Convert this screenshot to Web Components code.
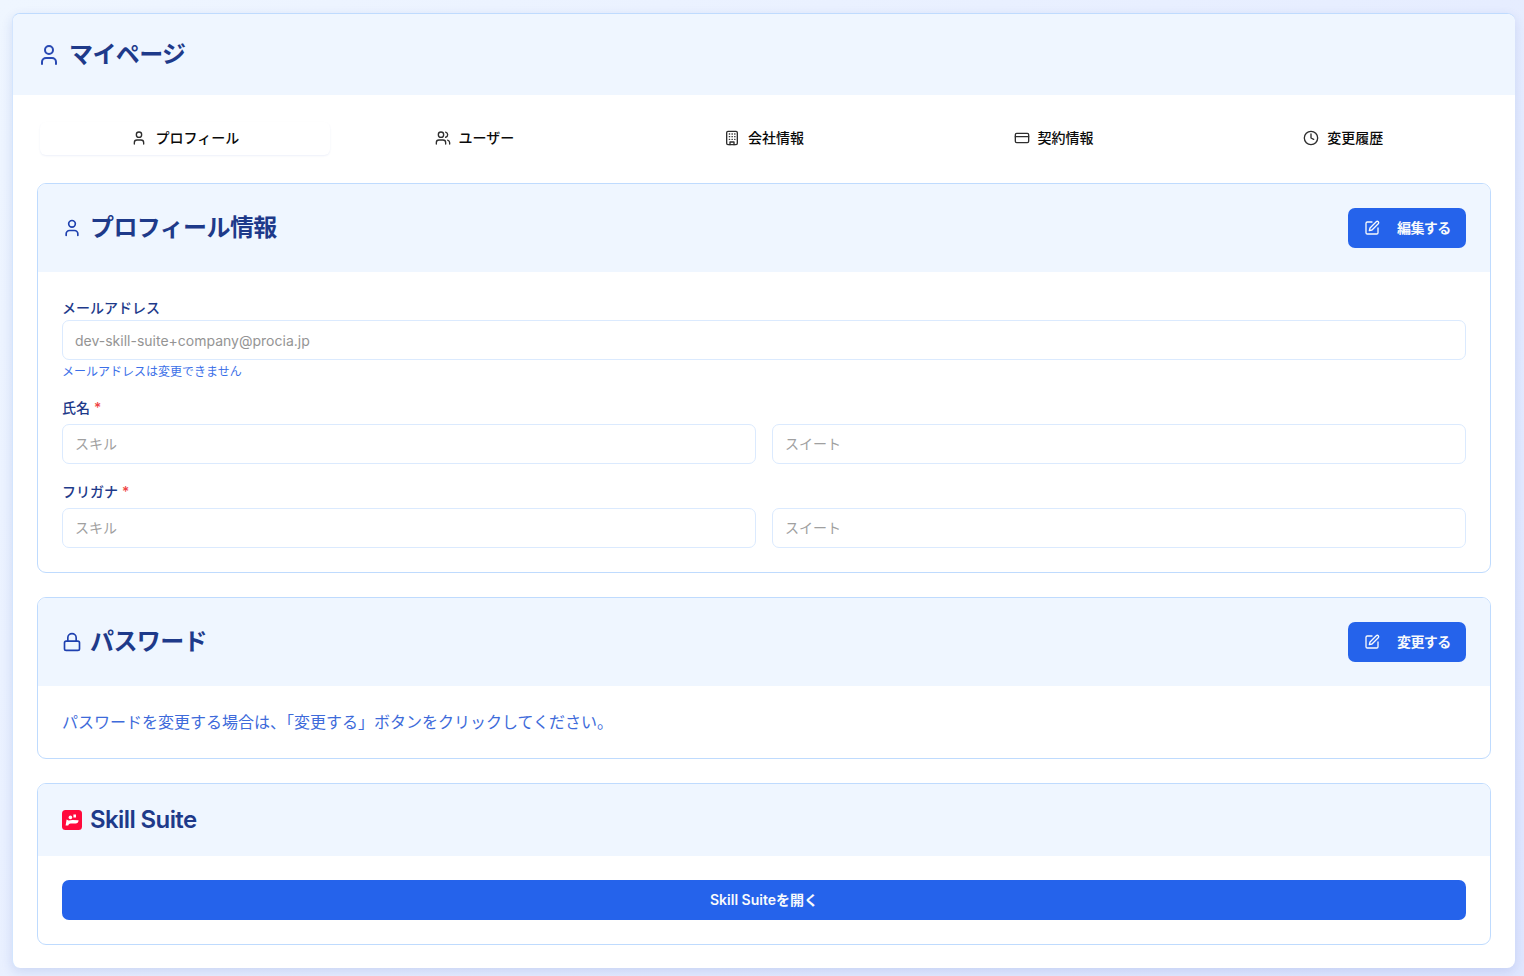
<!DOCTYPE html>
<html lang="ja">
<head>
<meta charset="utf-8">
<title>マイページ</title>
<style>
  html, body { margin: 0; height: 976px; overflow: hidden; }
  body {
    padding: 13px 9px 8px 12px;
    box-sizing: border-box;
    background: linear-gradient(135deg, #eff6ff, #e0e7ff);
    font-family: Inter, "Noto Sans CJK JP", sans-serif;
  }
</style>
</head>
<body>
<my-page>
  <span slot="title">マイページ</span>
  <tab-bar></tab-bar>
  <section-card icon="user" heading="プロフィール情報" action="編集する" head="88">
    <profile-form></profile-form>
  </section-card>
  <section-card icon="lock" heading="パスワード" action="変更する" head="88">
    <p class="note" style="margin:0;padding:0;font-size:16px;line-height:24px;color:#2456d6;opacity:.88;">パスワードを変更する場合は、「変更する」ボタンをクリックしてください。</p>
  </section-card>
  <section-card icon="logo" heading="Skill Suite" head="72">
    <wide-button>Skill Suiteを開く</wide-button>
  </section-card>
</my-page>

<script>
const ICONS = {
  user: '<path d="M19 21v-2a4 4 0 0 0-4-4H9a4 4 0 0 0-4 4v2"/><circle cx="12" cy="7" r="4"/>',
  users: '<path d="M16 21v-2a4 4 0 0 0-4-4H6a4 4 0 0 0-4 4v2"/><circle cx="9" cy="7" r="4"/><path d="M22 21v-2a4 4 0 0 0-3-3.87"/><path d="M16 3.13a4 4 0 0 1 0 7.75"/>',
  building: '<rect x="4" y="2" width="16" height="20" rx="2"/><path d="M9 22v-4h6v4"/><path d="M8 6h.5M16 6h.5M12 6h.5M12 10h.5M12 14h.5M16 10h.5M16 14h.5M8 10h.5M8 14h.5"/>',
  card: '<rect x="2" y="5" width="20" height="14" rx="2"/><line x1="2" y1="10" x2="22" y2="10"/>',
  clock: '<circle cx="12" cy="12" r="10"/><polyline points="12 6 12 12 16 14"/>',
  edit: '<path d="M12 3H5a2 2 0 0 0-2 2v14a2 2 0 0 0 2 2h14a2 2 0 0 0 2-2v-7"/><path d="M18.4 2.6a2.1 2.1 0 0 1 3 3L12 15l-4 1 1-4Z"/>',
  lock: '<rect x="3" y="11" width="18" height="11" rx="2"/><path d="M7 11V7a5 5 0 0 1 10 0v4"/>'
};

function icon(name, size, width) {
  return `<svg width="${size}" height="${size}" viewBox="0 0 24 24" fill="none" stroke="currentColor" stroke-width="${width || 2}" stroke-linecap="round" stroke-linejoin="round" aria-hidden="true">${ICONS[name]}</svg>`;
}

const LOGO = `<svg width="20" height="20" viewBox="0 0 20 20" aria-hidden="true">
  <rect width="20" height="20" rx="3.5" fill="#ff0a3c"/>
  <path d="M3.6 15.4 4.6 9.6 6.6 10.6C8 10 9.4 9.8 11 9.9L16.6 10.2C16.4 12.4 15.4 13.4 13.6 13.4H8.6C7.4 13.4 6.6 14.2 6.2 15.4Z" fill="#fff"/>
  <circle cx="8.4" cy="7.4" r="1.8" fill="#fff"/>
  <path d="M11.4 4.6h2.6v2.8h-2.6z" fill="#fff"/>
</svg>`;

class MyPage extends HTMLElement {
  constructor() {
    super();
    this.attachShadow({mode: 'open'});
    this.shadowRoot.innerHTML = `
      <style>
        :host {
          display: block;
          background: #fff;
          border-top: 1px solid #bfdbfe;
          border-left: 1px solid #d3e5fe;
          border-radius: 8px;
          box-shadow: 0 4px 12px rgba(30, 64, 175, .14);
          height: 955px;
          box-sizing: border-box;
          overflow: hidden;
        }
        header {
          height: 81px;
          background: #eff6ff;
          display: flex;
          align-items: center;
          gap: 8px;
          padding-left: 24px;
          color: #1e40af;
        }
        header svg { opacity: .95; }
        h1 {
          margin: 0;
          font-size: 24px;
          line-height: 32px;
          font-weight: 700;
          letter-spacing: -.6px;
          color: #1e3a8a;
        }
        main {
          padding: 24px 24px 0;
          display: flex;
          flex-direction: column;
          gap: 24px;
        }
      </style>
      <header>${icon('user', 24)}<h1><slot name="title"></slot></h1></header>
      <main><slot></slot></main>
    `;
  }
}

class TabBar extends HTMLElement {
  constructor() {
    super();
    this.attachShadow({mode: 'open'});
    const tabs = [['user', 'プロフィール'], ['users', 'ユーザー'], ['building', '会社情報'], ['card', '契約情報'], ['clock', '変更履歴']];
    this.shadowRoot.innerHTML = `
      <style>
        :host {
          display: grid;
          grid-template-columns: repeat(5, 1fr);
          padding: 3px 3px 4px;
          height: 40px;
          box-sizing: border-box;
        }
        div {
          display: flex;
          align-items: center;
          justify-content: center;
          gap: 8px;
          padding-bottom: 2px;
          font-size: 14px;
          line-height: 20px;
          font-weight: 500;
          color: #0a0a0a;
          border-radius: 6px;
        }
        div svg { opacity: .85; }
        .on { padding-left: 1px; box-shadow: 0 1px 2px rgba(30, 64, 175, .08); }
      </style>
      ${tabs.map((t, i) => `<div class="${i ? '' : 'on'}">${icon(t[0], 16)}<span>${t[1]}</span></div>`).join('')}
    `;
  }
}

class SectionCard extends HTMLElement {
  constructor() {
    super();
    this.attachShadow({mode: 'open'});
  }
  connectedCallback() {
    const name = this.getAttribute('icon');
    const action = this.getAttribute('action');
    const isLogo = name === 'logo';
    const svg = isLogo ? LOGO : icon(name, 20);
    this.shadowRoot.innerHTML = `
      <style>
        :host {
          display: block;
          border: 1px solid #bfdbfe;
          border-radius: 9px;
          overflow: hidden;
        }
        header {
          height: ${this.getAttribute('head')}px;
          box-sizing: border-box;
          background: #eff6ff;
          padding: 0 24px;
          display: flex;
          align-items: center;
          justify-content: space-between;
        }
        .title {
          display: flex;
          align-items: center;
          gap: 8px;
          color: #1e40af;
        }
        .title svg { display: block; flex: none; }
        h2 {
          margin: 0;
          font-size: 24px;
          line-height: 32px;
          font-weight: ${isLogo ? 600 : 700};
          color: #1e3a8a;
          letter-spacing: -.6px;
        }
        button {
          width: 118px;
          height: 40px;
          border: 0;
          border-radius: 7px;
          background: #2563eb;
          color: #f8fafc;
          font: 600 14px/20px Inter, "Noto Sans CJK JP", sans-serif;
          letter-spacing: -.6px;
          display: flex;
          align-items: center;
          gap: 17px;
          padding: 0 0 0 16px;
        }
        button span { padding-bottom: 1px; }
        .body { padding: 24px; }
      </style>
      <header>
        <div class="title">${svg}<h2>${this.getAttribute('heading')}</h2></div>
        ${action ? `<button>${icon('edit', 16)}<span>${action}</span></button>` : ''}
      </header>
      <div class="body"><slot></slot></div>
    `;
  }
}

class TextField extends HTMLElement {
  constructor() {
    super();
    this.attachShadow({mode: 'open'});
  }
  connectedCallback() {
    const muted = this.hasAttribute('filled');
    this.shadowRoot.innerHTML = `
      <style>
        :host {
          display: flex;
          align-items: center;
          height: 40px;
          box-sizing: border-box;
          padding: ${muted ? '1px' : '0'} 12px 0;
          border: 1px solid #dbeafe;
          border-radius: 7px;
          background: #fff;
          font-size: 14px;
          line-height: 20px;
          color: ${muted ? '#949494' : '#a0a0a0'};
        }
      </style>
      <slot></slot>
    `;
  }
}

class ProfileForm extends HTMLElement {
  constructor() {
    super();
    this.attachShadow({mode: 'open'});
    const star = '<em>*</em>';
    this.shadowRoot.innerHTML = `
      <style>
        :host { display: block; padding-top: 2px; }
        label {
          display: block;
          font-size: 14px;
          line-height: 20px;
          font-weight: 500;
          color: #1e3a8a;
          margin-bottom: 6px;
        }
        label em { font-style: normal; color: #ef4444; margin-left: 4px; }
        .mail label { margin-bottom: 2px; }
        .help {
          margin: 4px 0 0;
          font-size: 12px;
          line-height: 16px;
          color: #3b6fe8;
        }
        .row { margin-top: 18px; }
        .two { display: grid; grid-template-columns: 1fr 1fr; gap: 16px; }
      </style>
      <div class="mail">
        <label>メールアドレス</label>
        <text-field filled>dev-skill-suite+company@procia.jp</text-field>
        <p class="help">メールアドレスは変更できません</p>
      </div>
      <div class="row">
        <label>氏名${star}</label>
        <div class="two"><text-field>スキル</text-field><text-field>スイート</text-field></div>
      </div>
      <div class="row">
        <label>フリガナ${star}</label>
        <div class="two"><text-field>スキル</text-field><text-field>スイート</text-field></div>
      </div>
    `;
  }
}

class WideButton extends HTMLElement {
  constructor() {
    super();
    this.attachShadow({mode: 'open'});
    this.shadowRoot.innerHTML = `
      <style>
        :host {
          display: flex;
          align-items: center;
          justify-content: center;
          height: 40px;
          box-sizing: border-box;
          padding-bottom: 2px;
          border-radius: 7px;
          background: #2563eb;
          color: #f8fafc;
          font-size: 14px;
          font-weight: 600;
        }
      </style>
      <slot></slot>
    `;
  }
}

customElements.define('my-page', MyPage);
customElements.define('tab-bar', TabBar);
customElements.define('section-card', SectionCard);
customElements.define('text-field', TextField);
customElements.define('profile-form', ProfileForm);
customElements.define('wide-button', WideButton);
</script>
</body>
</html>
